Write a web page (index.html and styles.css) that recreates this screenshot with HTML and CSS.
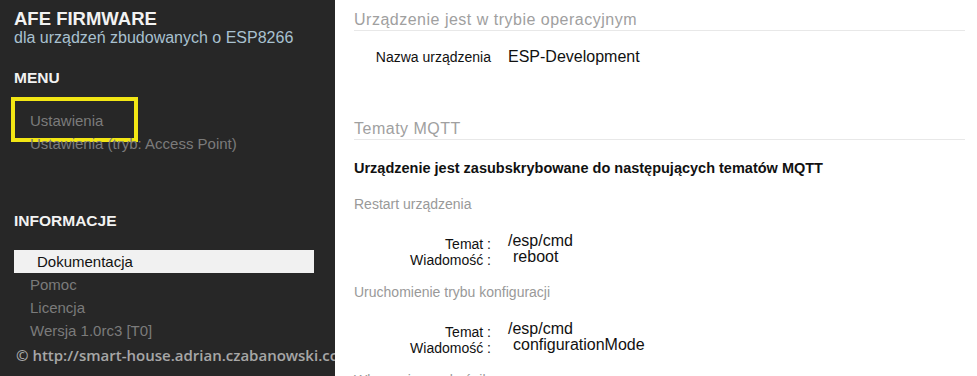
FILE: index.html
```html
<!DOCTYPE html>
<html lang="pl">
<head>
    <meta charset="UTF-8" />
    <meta name="viewport" content="width=device-width, initial-scale=1.0"/>
    <title>AFE Firmware</title>
    <link rel="stylesheet" href="styles.css">
</head>
<body>
    <!-- Left column: brand + navigation -->
    <aside class="sidebar">
        <div class="brand">
            <h1>AFE FIRMWARE</h1>
            <p>dla urządzeń zbudowanych o ESP8266</p>
        </div>

        <h3 class="menu-title">MENU</h3>
        <ul class="nav-links">
            <li class="marked"><a href="#">Ustawienia</a></li>
            <li><a href="#">Ustawienia (tryb: Access Point)</a></li>
        </ul>

        <h3 class="menu-title info-title">INFORMACJE</h3>
        <ul class="nav-links info-links">
            <li><a href="#" class="active">Dokumentacja</a></li>
            <li><a href="#">Pomoc</a></li>
            <li><a href="#">Licencja</a></li>
            <li><a href="#">Wersja 1.0rc3 [T0]</a></li>
        </ul>
    </aside>

    <!-- Right column: device status -->
    <main class="main-content">
        <section class="panel">
            <h2>Urządzenie jest w trybie operacyjnym</h2>
            <div class="fields device">
                <span class="label">Nazwa urządzenia</span>
                <span class="value">ESP-Development</span>
            </div>
        </section>

        <section class="panel mqtt">
            <h2>Tematy MQTT</h2>
            <p class="lead">Urządzenie jest zasubskrybowane do następujących tematów MQTT</p>

            <h4 class="topic-title">Restart urządzenia</h4>
            <div class="fields">
                <span class="label">Temat :</span>
                <span class="value">/esp/cmd</span>
                <span class="label">Wiadomość :</span>
                <span class="value shifted">reboot</span>
            </div>

            <h4 class="topic-title">Uruchomienie trybu konfiguracji</h4>
            <div class="fields">
                <span class="label">Temat :</span>
                <span class="value">/esp/cmd</span>
                <span class="label">Wiadomość :</span>
                <span class="value shifted">configurationMode</span>
            </div>

            <h4 class="topic-title">Włączenie przekaźnika</h4>
        </section>
    </main>

    <!-- watermark laid over the screenshot -->
    <div class="watermark">© http://smart-house.adrian.czabanowski.com</div>
</body>
</html>
```

FILE: styles.css
```css
* {
    box-sizing: border-box;
    margin: 0;
    padding: 0;
}

html, body {
    height: 100%;
}

body {
    font-family: "Liberation Sans", Arial, sans-serif;
    color: #111;
    display: flex;
    overflow: hidden;
    background: #fff;
    position: relative;
}

/* Sidebar */
.sidebar {
    width: 335px;
    flex-shrink: 0;
    background: #272727;
    padding: 8px 0 0 14px;
    display: flex;
    flex-direction: column;
}

.brand h1 {
    font-size: 18.5px;
    line-height: 21px;
    font-weight: bold;
    color: #f2f2f2;
}

.brand p {
    font-size: 16px;
    line-height: 18px;
    color: #a9c1d0;
}

.menu-title {
    margin-top: 22px;
    font-size: 15.5px;
    line-height: 17px;
    font-weight: bold;
    color: #f2f2f2;
}

.info-title {
    margin-top: 57px;
}

.nav-links {
    list-style: none;
    margin-top: 23px;
    width: 300px;
}

.info-links {
    margin-top: 21px;
}

.nav-links li {
    position: relative;
}

.nav-links a {
    display: block;
    padding-left: 16px;
    font-size: 15px;
    line-height: 23px;
    color: #7b7b7b;
    text-decoration: none;
}

.nav-links a.active {
    background: #f1f1f1;
    color: #111;
    padding-left: 23px;
}

/* yellow annotation frame around the first item */
.nav-links li.marked::before {
    content: "";
    box-sizing: border-box;
    position: absolute;
    left: -3px;
    top: -12px;
    width: 127px;
    height: 45px;
    border: 4px solid #f2e614;
}

/* Main content */
.main-content {
    flex: 1;
    padding: 0 12px 0 19px;
}

.panel h2 {
    margin-top: 10px;
    font-size: 16px;
    line-height: 20px;
    font-weight: normal;
    letter-spacing: 0.5px;
    color: #a0a0a0;
    border-bottom: 1px solid #e8e8e8;
}

.mqtt h2 {
    margin-top: 53px;
}

.fields {
    display: grid;
    grid-template-columns: 137px auto;
    column-gap: 17px;
    grid-auto-rows: 16px;
    align-items: start;
    margin-top: 21px;
}

.fields .label {
    text-align: right;
    font-size: 14px;
    line-height: 16px;
    padding-top: 3px;
    color: #111;
}

.fields .value {
    font-size: 16px;
    line-height: 16px;
    color: #111;
}

.fields .shifted {
    padding-left: 5px;
}

.fields.device {
    margin-top: 17px;
    grid-auto-rows: 18px;
    align-items: baseline;
}

.fields.device .label {
    padding-top: 0;
    line-height: 18px;
}

.fields.device .value {
    line-height: 18px;
}

.lead {
    margin-top: 21px;
    font-size: 14.5px;
    line-height: 15px;
    font-weight: bold;
}

.topic-title {
    margin-top: 20px;
    font-size: 14px;
    line-height: 15px;
    font-weight: normal;
    color: #999;
}

.lead + .topic-title {
    margin-top: 21px;
}

/* Watermark */
.watermark {
    position: absolute;
    left: 16px;
    top: 344px;
    font-family: "Open Sans", sans-serif;
    font-weight: 600;
    font-size: 15px;
    line-height: 22px;
    color: rgba(255, 255, 255, 0.6);
    white-space: nowrap;
}
```
